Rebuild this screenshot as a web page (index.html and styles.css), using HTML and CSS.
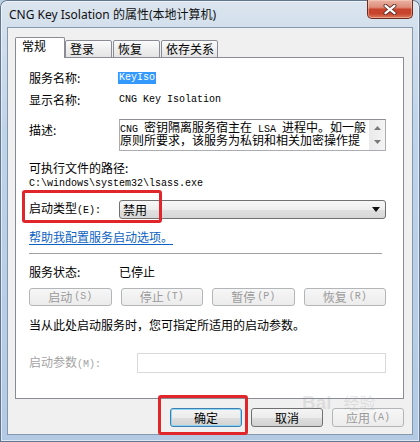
FILE: index.html
```html
<!DOCTYPE html>
<html lang="zh-CN">
<head>
<meta charset="utf-8">
<title>CNG Key Isolation 的属性(本地计算机)</title>
<link rel="stylesheet" href="styles.css">
</head>
<body>
<div class="window">
  <div class="titlebar">
    <span class="title">CNG Key Isolation 的属性(本地计算机)</span>
    <div class="close">
      <svg width="14" height="11" viewBox="0 0 14 11"><path d="M2.5 1.8 L11.5 9.2 M11.5 1.8 L2.5 9.2" stroke="#5a2a22" stroke-width="4" stroke-linecap="round"/><path d="M2.5 1.8 L11.5 9.2 M11.5 1.8 L2.5 9.2" stroke="#ffffff" stroke-width="2.3" stroke-linecap="round"/></svg>
    </div>
  </div>
  <div class="client">
    <div class="tabs">
      <div class="tab active">常规</div>
      <div class="tab t2">登录</div>
      <div class="tab t3">恢复</div>
      <div class="tab t4">依存关系</div>
    </div>
    <div class="panel">
      <div class="row r1"><span class="label">服务名称:</span><span class="ss sel">KeyIso</span></div>
      <div class="row r2"><span class="label">显示名称:</span><span class="ss">CNG Key Isolation</span></div>
      <div class="row r3">
        <span class="label">描述:</span>
        <div class="desc">
          <div class="desc-text">
            <div class="dline"><span class="ss">CNG </span>密钥隔离服务宿主在<span class="ss"> LSA </span>进程中。如一般</div>
            <div class="dline">原则所要求，该服务为私钥和相关加密操作提</div>
          </div>
          <div class="scroll">
            <svg width="7" height="4" viewBox="0 0 7 4"><path d="M0 4 L3.5 0 L7 4 Z" fill="#7a7a7a"/></svg>
            <svg width="7" height="4" viewBox="0 0 7 4"><path d="M0 0 L3.5 4 L7 0 Z" fill="#7a7a7a"/></svg>
          </div>
        </div>
      </div>
      <div class="row r4">可执行文件的路径:</div>
      <div class="row r5"><span class="ss">C:\windows\system32\lsass.exe</span></div>
      <div class="row r6">
        <span class="label">启动类型<span class="ss">(E):</span></span>
        <div class="combo"><span class="combo-text">禁用</span><svg width="8" height="5" viewBox="0 0 8 5"><path d="M0 0 L8 0 L4 5 Z" fill="#111"/></svg></div>
        <div class="mark mark1"></div>
      </div>
      <div class="row r7"><span class="link">帮助我配置服务启动选项。</span></div>
      <div class="sep"></div>
      <div class="row r8"><span class="label">服务状态:</span><span>已停止</span></div>
      <div class="btns">
        <div class="btn dis">启动<span class="ss">(S)</span></div>
        <div class="btn dis">停止<span class="ss">(T)</span></div>
        <div class="btn dis">暂停<span class="ss">(P)</span></div>
        <div class="btn dis">恢复<span class="ss">(R)</span></div>
      </div>
      <div class="row r10">当从此处启动服务时，您可指定所适用的启动参数。</div>
      <div class="row r11">
        <span class="label plabel">启动参数<span class="ss">(M):</span></span>
        <div class="input"></div>
      </div>
    </div>
    <div class="footer">
      <div class="btn def">确定<div class="mark mark2"></div></div>
      <div class="btn norm">取消</div>
      <div class="btn dis">应用<span class="ss">(A)</span></div>
    </div>
  </div>
  <div class="wm"><span class="wm-b">Bai</span><span class="wm-j">经验</span></div>
</div>
</body>
</html>
```

FILE: styles.css
```css
* { box-sizing: border-box; }
html, body { margin: 0; padding: 0; }
body {
  width: 420px;
  height: 442px;
  overflow: hidden;
  background: #b9cde3;
  font-family: "Noto Sans CJK SC", "Noto Sans", sans-serif;
  font-size: 12px;
  color: #000;
}
.window {
  position: relative;
  width: 420px;
  height: 442px;
  padding: 0 7px 7px 7px;
  border-radius: 7px 7px 0 0;
  background: linear-gradient(180deg, #dbe5ef 0%, #d2dfec 7%, #bfd3e9 30%, #b4cae4 100%);
  box-shadow: inset 0 0 0 1px #62778f, inset 0 0 0 2px rgba(255, 255, 255, 0.55);
}
.titlebar {
  height: 27px;
  display: flex;
  justify-content: space-between;
  align-items: flex-start;
}
.title {
  margin: 7px 0 0 2px;
  font-family: "Noto Sans", "Noto Sans CJK SC", sans-serif;
  font-size: 12px;
  line-height: 16px;
  color: #111;
}
.close {
  width: 46px;
  height: 19px;
  border: 1px solid #6b2d22;
  border-top: none;
  border-radius: 0 0 5px 5px;
  background: linear-gradient(180deg, #eab2a4 0%, #de8e7b 40%, #c9442c 52%, #c7432b 75%, #db7a5c 100%);
  box-shadow: inset 0 0 0 1px rgba(255, 220, 200, 0.45);
  display: flex;
  align-items: center;
  justify-content: center;
}
.client {
  height: 408px;
  border: 1px solid #8397ad;
  background: #f0f0f0;
  padding: 9px 8px 0 7px;
}
.tabs {
  position: relative;
  z-index: 1;
  display: flex;
  align-items: flex-end;
  height: 21px;
  margin-bottom: -1px;
}
.tab {
  height: 18px;
  border: 1px solid #898c95;
  border-radius: 2px 2px 0 0;
  background: linear-gradient(180deg, #fbfbfb 0%, #efefef 50%, #e4e4e4 100%);
  line-height: 16px;
  padding-left: 4px;
  white-space: nowrap;
}
.tab.active {
  width: 50px;
  height: 21px;
  border-bottom: none;
  background: #fff;
  padding-left: 6px;
}
.t2 { width: 47px; }
.t3 { width: 47px; margin-left: 1px; }
.t4 { width: 57px; margin-left: 1px; }
.panel {
  height: 342px;
  border: 1px solid #898c95;
  background: #fff;
  padding: 12px 17px 0 13px;
}
.ss {
  font-family: "Liberation Mono", "DejaVu Sans Mono", monospace;
  font-size: 10px;
}
.row {
  position: relative;
  display: flex;
  align-items: center;
  height: 16px;
  line-height: 16px;
  white-space: nowrap;
}
.label { width: 90px; flex: none; }
.sel {
  background: #3399ff;
  color: #fff;
  line-height: 12px;
  padding: 0 1px;
  margin-left: -1px;
}
.r2 { margin-top: 6px; }
.r3 { margin-top: 11px; height: 32px; align-items: flex-start; }
.r3 .label { margin-top: 3px; }
.desc {
  width: 267px;
  height: 32px;
  border: 1px solid #abadb3;
  border-top-color: #8e8f94;
  display: flex;
  background: #fff;
}
.desc-text {
  flex: 1;
  min-width: 0;
  padding-top: 0;
}
.dline {
  height: 13px;
  line-height: 13px;
  white-space: nowrap;
}
.scroll {
  width: 16px;
  flex: none;
  background: linear-gradient(90deg, #eaeaea, #f4f4f4);
  display: flex;
  flex-direction: column;
  align-items: center;
  justify-content: space-between;
  padding: 6px 0 6px 0;
}
.r4 { margin-top: 9px; }
.r6 { margin-top: 8px; height: 19px; }
.combo {
  width: 267px;
  height: 19px;
  border: 1px solid #707070;
  border-radius: 3px;
  background: linear-gradient(180deg, #f7f7f7 0%, #ededed 50%, #e0e0e0 52%, #d7d7d7 100%);
  display: flex;
  align-items: center;
  justify-content: space-between;
  padding: 0 5px 0 3px;
}
.combo-text { line-height: 16px; }
.r7 { margin-top: 10px; }
.link {
  color: #0b62c4;
  text-decoration: underline;
  text-underline-offset: 2px;
}
.sep {
  margin-top: 8px;
  margin-right: 4px;
  border-top: 1px solid #a0a0a0;
}
.r8 { margin-top: 10px; }
.btns {
  margin-top: 8px;
  display: grid;
  grid-template-columns: repeat(4, 1fr);
  gap: 9px;
  height: 18px;
}
.btn {
  position: relative;
  height: 18px;
  border: 1px solid #707070;
  border-radius: 3px;
  display: flex;
  align-items: center;
  justify-content: center;
  line-height: 16px;
  white-space: nowrap;
}
.btn .ss { margin-left: 2px; }
.btn.dis {
  border-color: #b3b6b8;
  background: linear-gradient(180deg, #f6f6f6, #ececec);
  color: #9a9a9a;
}
.btn.norm {
  background: linear-gradient(180deg, #f4f4f4 0%, #ececec 50%, #dedede 52%, #d2d2d2 100%);
}
.btn.def {
  border-color: #3c7fb1;
  background: linear-gradient(180deg, #f4f4f4 0%, #ececec 50%, #dedede 52%, #d2d2d2 100%);
  box-shadow: inset 0 0 0 1px #8fd5f4;
}
.r10 { margin-top: 11px; }
.r11 { margin-top: 20px; height: 20px; }
.plabel { width: 108px; color: #a3a3a3; }
.input {
  flex: 1;
  height: 20px;
  border: 1px solid #d9d9d9;
  background: #fff;
}
.footer {
  display: flex;
  justify-content: flex-end;
  gap: 9px;
  margin-top: 9px;
}
.footer .btn { width: 72px; height: 19px; }
.mark {
  position: absolute;
  border: 3px solid #e0262a;
  border-radius: 3px;
  pointer-events: none;
}
.mark1 { left: -7px; top: -10px; width: 140px; height: 33px; }
.mark2 { left: -13px; top: -14px; width: 90px; height: 40px; }
.wm {
  position: absolute;
  left: 302px;
  top: 392px;
  line-height: 20px;
  color: rgba(150, 150, 150, 0.22);
  pointer-events: none;
  white-space: nowrap;
}
.wm-b { font-family: "Liberation Sans", sans-serif; font-size: 19px; font-weight: bold; }
.wm-j { font-size: 16px; margin-left: 12px; }
```
